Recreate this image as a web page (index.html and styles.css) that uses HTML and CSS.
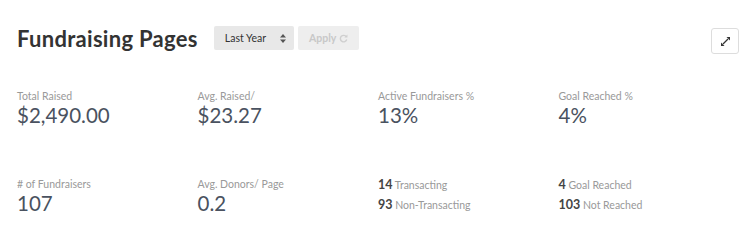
FILE: index.html
```html
<!DOCTYPE html>
<html lang="en">
<head>
    <meta charset="UTF-8">
    <title>Fundraising Pages</title>
    <link rel="stylesheet" href="styles.css">
</head>
<body>
    <header class="toolbar">
        <h1>Fundraising Pages</h1>
        <button class="range">Last Year <svg width="6" height="9" viewBox="0 0 6 9"><path d="M3 0L6 3.6H0z" fill="#555"/><path d="M3 9L6 5.4H0z" fill="#555"/></svg></button>
        <button class="apply" disabled>Apply <svg width="9" height="9" viewBox="0 0 10 10"><path d="M8.2 3.2A3.6 3.6 0 1 0 8.6 6.2" fill="none" stroke="#cfcfcf" stroke-width="1.6"/><path d="M9.4 0.6V4H6z" fill="#cfcfcf"/></svg></button>
        <button class="expand" title="Expand"><svg width="11" height="11" viewBox="0 0 11 11"><path d="M3 8L8 3" stroke="#333" stroke-width="1.2"/><path d="M1 10V6.5L4.5 10z" fill="#333"/><path d="M10 1V4.5L6.5 1z" fill="#333"/></svg></button>
    </header>
    <section class="stats">
        <div class="stat">
            <div class="label">Total Raised</div>
            <div class="value">$2,490.00</div>
        </div>
        <div class="stat">
            <div class="label">Avg. Raised/</div>
            <div class="value">$23.27</div>
        </div>
        <div class="stat">
            <div class="label">Active Fundraisers %</div>
            <div class="value">13%</div>
        </div>
        <div class="stat">
            <div class="label">Goal Reached %</div>
            <div class="value">4%</div>
        </div>
        <div class="stat">
            <div class="label"># of Fundraisers</div>
            <div class="value">107</div>
        </div>
        <div class="stat">
            <div class="label">Avg. Donors/ Page</div>
            <div class="value">0.2</div>
        </div>
        <div class="stat split">
            <div class="line"><b>14</b> Transacting</div>
            <div class="line"><b>93</b> Non-Transacting</div>
        </div>
        <div class="stat split">
            <div class="line"><b>4</b> Goal Reached</div>
            <div class="line"><b>103</b> Not Reached</div>
        </div>
    </section>
</body>
</html>
```

FILE: styles.css
```css
body {
    margin: 0;
    background: #fff;
    font-family: Lato, "Liberation Sans", sans-serif;
    color: #333;
}
.toolbar {
    display: flex;
    align-items: center;
    padding: 26px 11px 0 17px;
    height: 24px;
}
.toolbar h1 {
    margin: 0 16px 0 0;
    font-size: 22px;
    font-weight: 700;
    color: #333;
    letter-spacing: 0.3px;
}
.toolbar button {
    font-family: inherit;
    border: none;
    border-radius: 2px;
    height: 24px;
    font-size: 10.5px;
    padding: 0;
}
.range {
    width: 80px;
    background: #e8e8e8;
    color: #333;
    display: flex;
    align-items: center;
    justify-content: space-between;
    padding: 0 8px 0 11px !important;
    margin-right: 4px;
}
.apply {
    width: 61px;
    background: #eee;
    color: #c8c8c8;
    font-weight: 700;
}
.apply svg {
    vertical-align: -1px;
}
.expand {
    margin-left: auto;
    margin-top: 6px;
    width: 28px;
    height: 26px !important;
    background: #fff;
    border: 1px solid #ddd !important;
    border-radius: 3px !important;
    display: flex;
    align-items: center;
    justify-content: center;
}
.stats {
    display: grid;
    grid-template-columns: repeat(4, 180.5px);
    grid-template-rows: 88px auto;
    padding: 40px 0 0 17px;
}
.label {
    font-size: 10.5px;
    color: #999;
    line-height: 12px;
}
.value {
    font-size: 20.5px;
    color: #4a5260;
    line-height: 22px;
    margin-top: 2px;
}
.split {
    margin-top: -3px;
}
.line {
    font-size: 10.5px;
    color: #999;
    line-height: 20px;
}
.line b {
    font-size: 12.5px;
    font-weight: 700;
    color: #444;
}
```
